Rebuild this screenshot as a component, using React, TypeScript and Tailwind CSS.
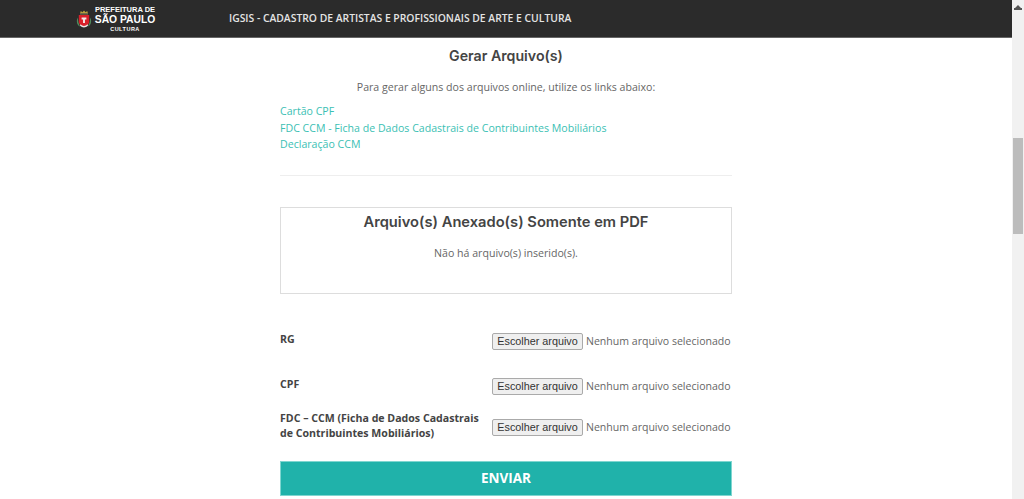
const links = [
  "Cartão CPF",
  "FDC CCM - Ficha de Dados Cadastrais de Contribuintes Mobiliários",
  "Declaração CCM",
];

function Brasao() {
  return (
    <svg width="16" height="20" viewBox="0 0 20 24" className="shrink-0">
      <path d="M5 5 L6 2 L8 3.5 L10 1.5 L12 3.5 L14 2 L15 5 Z" fill="#b9a13c" />
      <rect x="5" y="4.5" width="10" height="2" fill="#6f6a4a" />
      <path d="M2 10 C0 15 1.5 20 5 21.5 L3 16 Z" fill="#4f8a5b" />
      <path d="M18 10 C20 15 18.5 20 15 21.5 L17 16 Z" fill="#4f8a5b" />
      <path d="M3.5 7 H16.5 V15 C16.5 19 13 21 10 22 C7 21 3.5 19 3.5 15 Z" fill="#d8202a" />
      <path d="M7 10 H13 V12.5 H11.2 V17 H8.8 V12.5 H7 Z" fill="#f3e9e9" />
      <path d="M5.5 18.5 Q10 23 14.5 18.5 L15 20.5 Q10 24.5 5 20.5 Z" fill="#e8e8e8" />
    </svg>
  );
}

function FileRow(props: { label: string; rowClass: string; fileClass: string }) {
  return (
    <div className={`flex justify-between ${props.rowClass}`}>
      <p className="w-[205px] font-bold text-[10.6px] leading-[15px] text-[#444]">{props.label}</p>
      <div className={`flex items-center h-[18px] ${props.fileClass}`}>
        <button className="w-[91px] h-[17px] bg-[#efefef] border border-[#aaa] rounded-[2px] text-[10.8px] leading-none whitespace-nowrap text-[#333] font-['Liberation_Sans',sans-serif]">
          Escolher arquivo
        </button>
        <span className="ml-[3px] w-[146px] text-[10.55px] whitespace-nowrap text-[#666]">Nenhum arquivo selecionado</span>
      </div>
    </div>
  );
}

export default function App() {
  return (
    <div className="flex w-[1024px] h-[499px] overflow-hidden bg-white font-['Open_Sans',sans-serif]">
      <div className="w-[1012px] flex flex-col">
        <header className="h-[38px] shrink-0 flex items-center bg-[#2b2b2b] border-b border-[#666] pl-[76px]">
          <Brasao />
          <div className="ml-[3px] w-[60px] flex flex-col items-center text-white font-['Liberation_Sans',sans-serif] font-bold leading-none">
            <span className="text-[7.5px] leading-[8px] whitespace-nowrap">PREFEITURA DE</span>
            <span className="text-[10.3px] leading-[11px] whitespace-nowrap">SÃO PAULO</span>
            <span className="mt-[1px] text-[5.5px] leading-[6px] tracking-[0.5px]">CULTURA</span>
          </div>
          <span className="ml-[74px] text-[10.35px] font-semibold text-[#e4e4e4] whitespace-nowrap">
            IGSIS - CADASTRO DE ARTISTAS E PROFISSIONAIS DE ARTE E CULTURA
          </span>
        </header>

        <main className="w-[452px] mx-auto">
          <h2 className="mt-[9px] text-center text-[14.2px] leading-[18px] font-semibold text-[#444] font-['Inter',sans-serif]">
            Gerar Arquivo(s)
          </h2>
          <p className="mt-[14px] text-center text-[10.6px] leading-[16px] text-[#666]">
            Para gerar alguns dos arquivos online, utilize os links abaixo:
          </p>
          <div className="mt-[8px] flex flex-col text-[10.6px] leading-[16.5px] text-[#3bbfb4]">
            {links.map((link) => (
              <a key={link}>{link}</a>
            ))}
          </div>
          <hr className="mt-[22px] border-t border-[#eee]" />

          <section className="mt-[31px] h-[87px] border border-[#ddd] text-center">
            <h2 className="mt-[5px] text-[14.7px] leading-[18px] font-semibold text-[#444] font-['Inter',sans-serif]">
              Arquivo(s) Anexado(s) Somente em PDF
            </h2>
            <p className="mt-[14px] text-[10.6px] leading-[16px] text-[#666]">Não há arquivo(s) inserido(s).</p>
          </section>

          <div className="mt-[38px] flex flex-col">
            <FileRow label="RG" rowClass="h-[45px]" fileClass="mt-[1px]" />
            <FileRow label="CPF" rowClass="h-[34px]" fileClass="mt-[1px]" />
            <FileRow label="FDC – CCM (Ficha de Dados Cadastrais de Contribuintes Mobiliários)" rowClass="h-[50px]" fileClass="mt-[8px]" />
          </div>

          <button className="w-full h-[35px] bg-[#20b2aa] border border-[#7fd6d0] text-white text-[13.5px] font-bold">
            ENVIAR
          </button>
        </main>
      </div>

      <aside className="w-[12px] shrink-0 bg-[#f1f1f1] flex flex-col items-center">
        <svg width="8" height="5" viewBox="0 0 8 5" className="mt-[5px] shrink-0">
          <path d="M4 0 L7 3 H8 V5 H0 V3 H1 Z" fill="#555" />
        </svg>
        <div className="mt-[128px] w-[10px] h-[96px] bg-[#bcbcbc]" />
      </aside>
    </div>
  );
}
